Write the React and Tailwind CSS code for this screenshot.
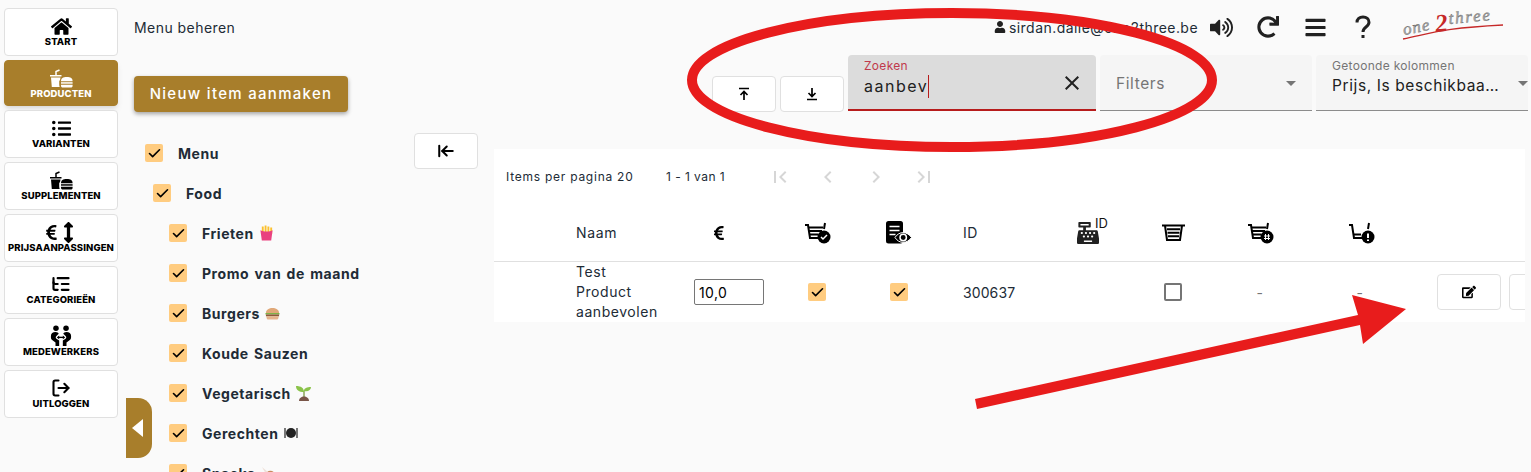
import React from 'react';
import { FaHome, FaListUl, FaEuroSign, FaArrowsAltV, FaUser, FaVolumeUp, FaRedo, FaBars, FaCashRegister, FaEdit } from 'react-icons/fa';
import { MdClose, MdArrowDropDown, MdFirstPage, MdLastPage, MdChevronLeft, MdChevronRight } from 'react-icons/md';
import { ArrowLeftToLine, Check, ListTree, LogOut } from 'lucide-react';

const FastFood = () => (
  <svg width="23" height="19" viewBox="0 0 23 19" fill="currentColor">
    <path d="M0 6h11.500v1.500H0zM1 8.500h9.500L10 11c-.5.5-.8 1-.8 2v1.500c0 1 0 2 .5 3.500H1.800z" />
    <path d="M6 6V2.500L9.500 1" fill="none" stroke="currentColor" strokeWidth="1.500" />
    <path d="M11 12.200c0-3 2-4.200 5.800-4.200s5.800 1.200 5.800 4.200z" />
    <rect x="11" y="13.200" width="11.600" height="1.500" />
    <path d="M11 15.700h11.600v1c0 1-.7 1.800-1.700 1.800h-8.200c-1 0-1.700-.8-1.700-1.800z" />
  </svg>
);

const Workers = () => (
  <svg width="22" height="22" viewBox="0 0 24 24" fill="black">
    <circle cx="6.500" cy="3.500" r="3" />
    <circle cx="17.500" cy="3.500" r="3" />
    <path d="M1 12c0-3 2-4.500 5-4.500 2 0 3 .8 3.500 2L7 12c-1 1-1 2 0 3l3 2v6H6v-4l-4-3c-1-1-1-2-1-4zM23 12c0-3-2-4.500-5-4.500-2 0-3 .8-3.500 2L17 12c1 1 1 2 0 3l-3 2v6h4v-4l4-3c1-1 1-2 1-4z" />
    <path d="M8.500 13.500h7" stroke="black" strokeWidth="1.500" />
    <path d="M10 11.500l-2.500 2 2.500 2zM14 11.500l2.500 2-2.500 2z" />
  </svg>
);

const navItems = [
  { label: 'START', icon: <FaHome size={21} /> },
  { label: 'PRODUCTEN', icon: <FastFood />, active: true },
  { label: 'VARIANTEN', icon: <FaListUl size={19} /> },
  { label: 'SUPPLEMENTEN', icon: <FastFood /> },
  { label: 'PRIJSAANPASSINGEN', icon: <span className="flex items-center"><FaEuroSign size={17} /><FaArrowsAltV size={21} className="-ml-[2px]" /></span> },
  { label: 'CATEGORIEËN', icon: <ListTree size={20} strokeWidth={2.600} /> },
  { label: 'MEDEWERKERS', icon: <Workers /> },
  { label: 'UITLOGGEN', icon: <LogOut size={20} strokeWidth={2.500} /> },
];

const Fries = () => (
  <svg width="15" height="16" viewBox="0 0 16 16" className="inline-block">
    <path d="M3 1h2v8H3zM6 0h2v8H6zM9 1h2v8H9zM12 2h2v7h-2z" fill="#fbc02d" />
    <path d="M1.500 5c3 2 10 2 13 0L13 16H3z" fill="#e9417f" />
  </svg>
);
const Burger = () => (
  <svg width="15" height="13" viewBox="0 0 16 13" className="inline-block">
    <path d="M1 6c0-7 14-7 14 0z" fill="#e0a878" />
    <rect x="0.500" y="6" width="15" height="1.500" fill="#7cb342" />
    <rect x="1" y="7.500" width="14" height="2" fill="#8d5a3a" />
    <path d="M1.500 9.500h13c0 3-1 3.500-2 3.500h-9c-1 0-2-.5-2-3.500z" fill="#e5b48c" />
  </svg>
);
const Seedling = () => (
  <svg width="16" height="16" viewBox="0 0 16 16" className="inline-block">
    <path d="M8 12V6" stroke="#6d8f2e" strokeWidth="1.200" />
    <path d="M8 7C8 3 5 1 0 1c0 4 3 6 8 6zM8 6c0-3 3-4 7-4 0 3-3 5-7 4z" fill="#8bc34a" />
    <path d="M3 16c0-6 10-6 10 0z" fill="#795548" />
  </svg>
);
const Plate = () => (
  <svg width="14" height="12" viewBox="0 0 14 12" className="inline-block">
    <circle cx="7" cy="6" r="5" fill="#222" />
    <path d="M1 1v10M13 1v10" stroke="#222" strokeWidth="1.200" />
  </svg>
);
const Drumstick = () => (
  <svg width="15" height="15" viewBox="0 0 16 16" className="inline-block">
    <path d="M1 1l6 5-2 2z" fill="#eee0d8" />
    <circle cx="10" cy="10" r="5" fill="#c98a5e" />
  </svg>
);

const treeRows = [
  { label: 'Menu', indent: 'pl-[11px]' },
  { label: 'Food', indent: 'pl-[19px]' },
  { label: 'Frieten', indent: 'pl-[35px]', emoji: <Fries /> },
  { label: 'Promo van de maand', indent: 'pl-[35px]' },
  { label: 'Burgers', indent: 'pl-[35px]', emoji: <Burger /> },
  { label: 'Koude Sauzen', indent: 'pl-[35px]' },
  { label: 'Vegetarisch', indent: 'pl-[35px]', emoji: <Seedling /> },
  { label: 'Gerechten', indent: 'pl-[35px]', emoji: <Plate /> },
  { label: 'Snacks', indent: 'pl-[35px]', emoji: <Drumstick /> },
];

const CheckBox = ({ checked = true }) =>
  checked ? (
    <span className="flex h-[18px] w-[18px] shrink-0 items-center justify-center rounded-[2px] bg-[#ffcc80]">
      <Check size={15} strokeWidth={2.600} className="text-black" />
    </span>
  ) : (
    <span className="block h-[18px] w-[18px] shrink-0 rounded-[2px] border-2 border-[#757575] bg-white" />
  );

const CartBase = ({ lines = true, children }) => (
  <svg width="27" height="22" viewBox="0 0 27 22" fill="none" stroke="black" strokeWidth="2">
    <path d="M1 3h3l2 13h8" />
    <path d="M21 1l-1 6" />
    {lines && <path d="M4 5.500h15M5 9h13M5.500 12.500h9" />}
    {children}
  </svg>
);
const CartCheck = () => (
  <CartBase>
    <circle cx="20" cy="15" r="6.500" fill="black" stroke="none" />
    <path d="M17 15l2 2 4-4" stroke="white" strokeWidth="1.500" />
  </CartBase>
);
const CartHash = () => (
  <CartBase>
    <circle cx="20" cy="15" r="6.500" fill="black" stroke="none" />
    <path d="M18.500 12v6M21.500 12v6M17 14h6M17 16.500h6" stroke="white" strokeWidth="1" />
  </CartBase>
);
const CartAlert = () => (
  <CartBase lines={false}>
    <path d="M6 12.500h7" />
    <circle cx="20" cy="15" r="6.500" fill="black" stroke="none" />
    <path d="M20 11.500v4.500M20 17.500v1.500" stroke="white" strokeWidth="2" />
  </CartBase>
);
const DocEye = () => (
  <svg width="26" height="23" viewBox="0 0 26 23">
    <rect x="0" y="0" width="17" height="22.500" rx="2.500" fill="black" />
    <path d="M3.500 5.500h10M3.500 9.500h10M3.500 13.500h6" stroke="white" strokeWidth="1.500" />
    <path d="M9 16.500c4-6.500 12-6.500 16.500 0-4.500 6.500-12.500 6.500-16.500 0z" fill="black" stroke="white" strokeWidth="1" />
    <circle cx="17.200" cy="16.500" r="3.200" fill="none" stroke="white" strokeWidth="1.500" />
  </svg>
);
const Basket = () => (
  <svg width="23" height="17" viewBox="0 0 23 17" fill="none" stroke="black" strokeWidth="2">
    <path d="M0 1.500h23M3 1.500l2 14.500h13l2-14.500" />
    <path d="M5 5.200h13M5.500 8.700h12M6 12.200h11" />
  </svg>
);

const ExportIcon = ({ up }) => (
  <svg width="14" height="14" viewBox="0 0 14 14" fill="none" stroke="black" strokeWidth="1.700">
    {up ? <path d="M2 1.500h10M7 13V4.500M3.500 8L7 4.500 10.500 8" /> : <path d="M2 12.500h10M7 1v8.500M3.500 6L7 9.500 10.500 6" />}
  </svg>
);

const HelpIcon = () => (
  <svg width="16" height="24" viewBox="0 0 16 24" fill="none" stroke="#212121" strokeWidth="3">
    <path d="M2 7.500C2 4 4.500 2 8 2s6 2 6 5.200c0 2.300-1.200 3.400-3 4.800-2 1.500-3 2.400-3 5" />
    <path d="M8 20v3" />
  </svg>
);

const Logo = () => (
  <svg width="102" height="28" viewBox="0 0 102 28" className="mt-[-3px] overflow-visible">
    <g fontFamily="'Liberation Serif', serif" fontStyle="italic">
      <text x="1" y="23" fontSize="17" letterSpacing="1" fill="#b0b0b0" stroke="#666" strokeWidth="0.400" transform="rotate(-11 1 23)">one</text>
      <text x="33" y="20" fontSize="25" fontWeight="700" fill="#c62828" transform="rotate(-6 33 20)">2</text>
      <text x="46" y="12" fontSize="17" letterSpacing="1.800" fill="#b0b0b0" stroke="#666" strokeWidth="0.400" transform="rotate(-5 46 12)">three</text>
    </g>
    <path d="M0 27C30 21 40 16 100 13" fill="none" stroke="#c62828" strokeWidth="1.300" />
  </svg>
);

const IconButton = ({ children }) => (
  <button className="flex h-9 w-16 shrink-0 items-center justify-center rounded-[4px] border border-[#e0e0e0] bg-white text-black">
    {children}
  </button>
);

const Field = ({ label, value, arrow }) => (
  <div className="relative h-14 w-[212px] shrink-0 rounded-t-[4px] border-b border-[#8c8c8c] bg-[#f5f5f5] px-4">
    {label && <div className="pt-[3px] text-[12px] leading-4 tracking-[0.3px] text-[#757575]">{label}</div>}
    <div className={`truncate pr-[9px] text-[15.500px] tracking-[0.6px] ${label ? 'leading-6 text-[#212121]' : 'leading-[58px] text-[#757575]'}`}>{value}</div>
    <MdArrowDropDown size={24} className={`absolute top-[16px] text-[#757575] ${arrow}`} />
  </div>
);

const columns = 'grid grid-cols-[82px_118px_82px_82px_82px_110px_90px_66px_108px_92px_119px] items-center';

export default function App() {
  return (
    <div className="relative flex h-[472px] w-[1531px] overflow-hidden bg-[#fafafa] font-['Inter',sans-serif] text-[#212b36]">
      <aside className="flex w-[126px] shrink-0 flex-col gap-1 pl-1 pt-2">
        {navItems.map((item) => (
          <button
            key={item.label}
            className={`flex w-[114px] flex-col items-center justify-start rounded-[4px] border pt-[7px] ${
              item.active ? 'h-[46px] border-[#a87e2b] bg-[#a87e2b] text-white shadow-md' : 'h-12 border-[#e0e0e0] bg-white text-black'
            }`}
          >
            <span className="flex h-5 items-center">{item.icon}</span>
            <span className="text-[9.500px] font-extrabold leading-[11px] tracking-[0.1px]">{item.label}</span>
          </button>
        ))}
      </aside>

      <div className="w-[368px] shrink-0 pl-2 pt-[18px]">
        <div className="text-[14px] leading-5 tracking-[0.45px]">Menu beheren</div>
        <button className="mt-[38px] h-9 w-[214px] rounded-[4px] bg-[#a87e2b] text-[15px] font-medium tracking-[1.300px] text-white shadow-[0_2px_4px_rgba(0,0,0,0.35)]">
          Nieuw item aanmaken
        </button>
        <div className="mt-[21px] flex">
          <div className="w-[280px] shrink-0">
            {treeRows.map((row) => (
              <div key={row.label} className={`flex h-10 items-center gap-[15px] ${row.indent}`}>
                <CheckBox />
                <span className="flex items-center gap-[5px] text-[14px] font-bold tracking-[0.55px] [word-spacing:1.500px]">
                  {row.label} {row.emoji}
                </span>
              </div>
            ))}
          </div>
          <IconButton><ArrowLeftToLine size={18} strokeWidth={2.700} /></IconButton>
        </div>
      </div>

      <div className="min-w-0 flex-1">
        <div className="flex h-[55px] items-center justify-end pr-[26px] pb-[1px]">
          <FaUser size={12} className="mr-[3px] text-[#212121]" />
          <span className="text-[14px] tracking-[0.45px]">sirdan.dalle@one2three.be</span>
          <FaVolumeUp size={23} className="ml-[12px] text-[#212121]" />
          <FaRedo size={22} className="ml-[24px] text-[#212121]" />
          <FaBars size={23} className="ml-[25px] text-[#212121]" />
          <span className="ml-[28px]"><HelpIcon /></span>
          <span className="ml-[32px]"><Logo /></span>
        </div>

        <div className="flex items-end justify-end gap-1 pr-[3px]">
          <div className="-mb-px flex gap-1">
            <IconButton><ExportIcon up /></IconButton>
            <IconButton><ExportIcon /></IconButton>
          </div>
          <div className="relative h-14 w-[248px] shrink-0 rounded-t-[4px] border-b-2 border-[#b71c1c] bg-[#dcdcdc] px-4">
            <div className="pt-[3px] text-[12px] leading-4 tracking-[0.3px] text-[#c0394b]">Zoeken</div>
            <div className="flex h-6 items-center text-[16px] tracking-[1.500px] text-[#212121]">
              aanbev<span className="h-[23px] w-px bg-[#b71c1c]" />
            </div>
            <MdClose size={24} className="absolute right-[12px] top-[16px] text-[#212121]" />
          </div>
          <Field value="Filters" arrow="right-[9px]" />
          <Field label="Getoonde kolommen" value="Prijs, Is beschikbaar, Zichtbaar" arrow="right-[-7px]" />
        </div>

        <div className="mt-[38px] mr-[6px] bg-white">
          <div className="flex h-[54px] items-center pl-3 pt-[2px] text-[12px] tracking-[0.75px]">
            <span className="w-[160px]">Items per pagina 20</span>
            <span className="w-[96px] tracking-[0.45px]">1 - 1 van 1</span>
            <div className="ml-[6px] flex gap-[24px] text-[#d6d6d6]">
              <MdFirstPage size={24} />
              <MdChevronLeft size={24} />
              <MdChevronRight size={24} />
              <MdLastPage size={24} />
            </div>
          </div>

          <div className={`${columns} h-[59px] border-b border-[#e0e0e0] pt-[1px] text-[14px] tracking-[0.4px]`}>
            <span />
            <span className="tracking-[0.7px]">Naam</span>
            <span className="pr-[32px] text-center"><FaEuroSign size={16} className="mx-auto text-black" /></span>
            <span className="flex justify-center"><CartCheck /></span>
            <span className="flex justify-center"><DocEye /></span>
            <span className="pl-[23px]">ID</span>
            <span className="flex justify-center pr-[14px]">
              <span className="relative">
                <FaCashRegister size={22} className="text-[#212121]" />
                <span className="absolute left-[18px] top-[-7px] text-[13px] leading-4 tracking-normal text-[#111]">ID</span>
              </span>
            </span>
            <span className="flex justify-center"><Basket /></span>
            <span className="flex justify-center"><CartHash /></span>
            <span className="flex justify-center pl-[2px]"><CartAlert /></span>
            <span />
          </div>

          <div className={`${columns} h-[60px] overflow-hidden text-[14px] tracking-[0.4px]`}>
            <span />
            <span className="w-[70px] leading-5 tracking-[0.55px]">Test Product aanbevolen</span>
            <input readOnly value="10,0" className="h-[26px] w-[70px] rounded-[2px] border border-[#767676] bg-white pl-1 text-[14px] text-black" />
            <span className="flex justify-center"><CheckBox /></span>
            <span className="flex justify-center"><CheckBox /></span>
            <span className="pl-[23px] tracking-[0.1px]">300637</span>
            <span />
            <span className="flex justify-center"><CheckBox checked={false} /></span>
            <span className="text-center text-[#757575]">-</span>
            <span className="text-center text-[#757575]">-</span>
            <span className="flex gap-2 overflow-hidden pl-[31px]">
              <IconButton><FaEdit size={14} /></IconButton>
              <IconButton />
            </span>
          </div>
        </div>
      </div>

      {/* vak onderin de zijbalk */}
      <div className="absolute left-[126px] top-[398px] flex h-[60px] w-[26px] items-center rounded-r-[14px] bg-[#a87e2b] pl-[6px]">
        <span className="h-0 w-0 border-y-[9px] border-r-[11px] border-y-transparent border-r-white" />
      </div>

      {/* rode annotaties over de pagina */}
      <svg width="1531" height="472" viewBox="0 0 1531 472" className="pointer-events-none absolute left-0 top-0">
        <ellipse cx="952" cy="80" rx="260" ry="67" fill="none" stroke="#e81c1c" strokeWidth="10" />
        <polygon points="975,399 1358,315 1352,295 1406,309 1363,344 1360,325 977,409" fill="#e81c1c" />
      </svg>
    </div>
  );
}
